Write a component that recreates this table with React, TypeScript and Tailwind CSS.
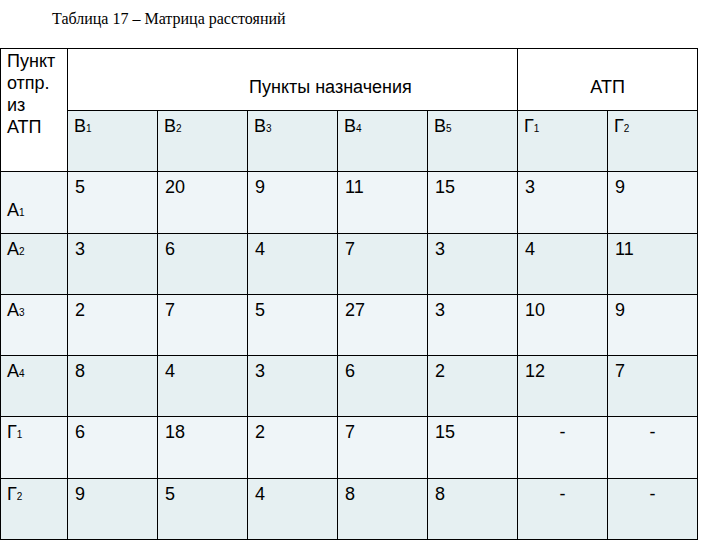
import React from "react";

const Sub = ({ base, sub }: { base: string; sub: string }) => (
  <span>
    {base}
    <span className="text-[10px]">{sub}</span>
  </span>
);

const rows: { label: [string, string]; vals: string[]; top?: boolean }[] = [
  { label: ["А", "1"], vals: ["5", "20", "9", "11", "15", "3", "9"], top: true },
  { label: ["А", "2"], vals: ["3", "6", "4", "7", "3", "4", "11"] },
  { label: ["А", "3"], vals: ["2", "7", "5", "27", "3", "10", "9"] },
  { label: ["А", "4"], vals: ["8", "4", "3", "6", "2", "12", "7"] },
  { label: ["Г", "1"], vals: ["6", "18", "2", "7", "15", "-", "-"] },
  { label: ["Г", "2"], vals: ["9", "5", "4", "8", "8", "-", "-"] },
];

const heights = ["h-[62px]", "h-[61px]", "h-[61px]", "h-[61px]", "h-[62px]", "h-[61px]"];

export default function App() {
  return (
    <div className="w-[720px] h-[540px] bg-white overflow-hidden">
      <div
        className="h-[48px] pl-[52px] pt-[9px] text-[16px] leading-[20px] text-black"
        style={{ fontFamily: '"Liberation Serif", "Times New Roman", serif' }}
      >
        Таблица 17 – Матрица расстояний
      </div>
      <table
        className="w-[697px] border-collapse table-fixed text-[18px] leading-[22px] text-black"
        style={{ fontFamily: '"Liberation Sans", Arial, sans-serif' }}
      >
        <colgroup>
          <col className="w-[67px]" />
          <col className="w-[90px]" />
          <col className="w-[90px]" />
          <col className="w-[90px]" />
          <col className="w-[90px]" />
          <col className="w-[90px]" />
          <col className="w-[90px]" />
          <col className="w-[90px]" />
        </colgroup>
        <tbody>
          <tr className="h-[62px]">
            <td rowSpan={2} className="border border-black bg-white align-top pl-[6px] pt-[1px] font-normal">
              Пункт<br />отпр.<br />из<br />АТП
            </td>
            <td colSpan={5} className="border border-black bg-white align-top pl-[181px] pt-[27px]">
              Пункты назначения
            </td>
            <td colSpan={2} className="border border-black bg-white align-top text-center pt-[27px]">
              АТП
            </td>
          </tr>
          <tr className="h-[61px]">
            {[
              ["В", "1"],
              ["В", "2"],
              ["В", "3"],
              ["В", "4"],
              ["В", "5"],
              ["Г", "1"],
              ["Г", "2"],
            ].map(([b, s], i) => (
              <td key={i} className="border border-black bg-[#e6f0f2] align-top pl-[6px] pt-[4px]">
                <Sub base={b} sub={s} />
              </td>
            ))}
          </tr>
          {rows.map((r, ri) => (
            <tr key={ri} className={heights[ri]}>
              <td
                className={`border border-black align-top pl-[6px] ${r.top ? "pt-[27px]" : "pt-[4px]"} ${
                  ri % 2 === 0 ? "bg-[#eff5f8]" : "bg-[#e6f0f2]"
                }`}
              >
                <Sub base={r.label[0]} sub={r.label[1]} />
              </td>
              {r.vals.map((v, vi) => (
                <td
                  key={vi}
                  className={`border border-black align-top pt-[4px] ${v === "-" ? "text-center" : "pl-[7px]"} ${
                    ri % 2 === 0 ? "bg-[#eff5f8]" : "bg-[#e6f0f2]"
                  }`}
                >
                  {v}
                </td>
              ))}
            </tr>
          ))}
        </tbody>
      </table>
    </div>
  );
}
